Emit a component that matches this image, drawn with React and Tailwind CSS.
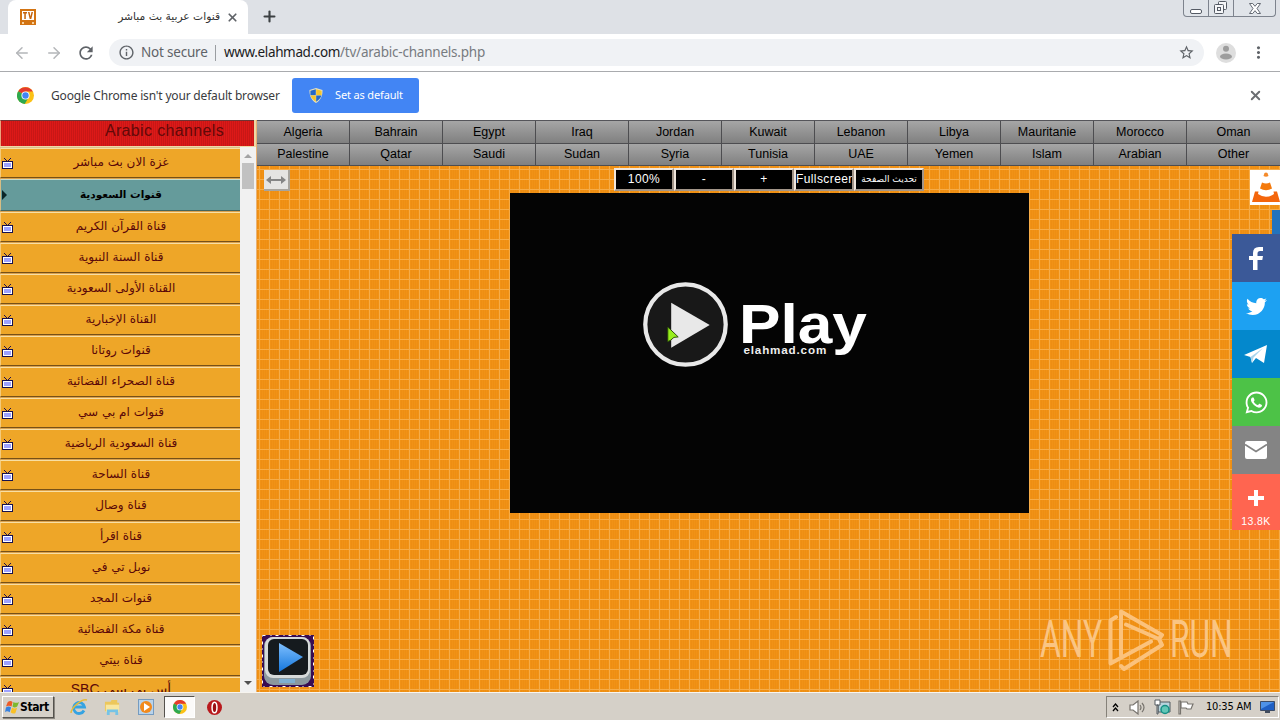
import React from 'react';
import { ArrowLeft, ArrowRight, X, Plus } from 'lucide-react';
import { FaFacebookF, FaTwitter, FaWhatsapp } from 'react-icons/fa';
import { MdRefresh, MdStarBorder, MdMoreVert, MdInfoOutline } from 'react-icons/md';

const channels = [
  'غزة الان بث مباشر',
  'قنوات السعودية',
  'قناة القرآن الكريم',
  'قناة السنة النبوية',
  'القناة الأولى السعودية',
  'القناة الإخبارية',
  'قنوات روتانا',
  'قناة الصحراء الفضائية',
  'قنوات ام بي سي',
  'قناة السعودية الرياضية',
  'قناة الساحة',
  'قناة وصال',
  'قناة اقرأ',
  'نوبل تي في',
  'قنوات المجد',
  'قناة مكة الفضائية',
  'قناة بيتي',
];

const countries = [
  ['Algeria', 'Bahrain', 'Egypt', 'Iraq', 'Jordan', 'Kuwait', 'Lebanon', 'Libya', 'Mauritanie', 'Morocco', 'Oman'],
  ['Palestine', 'Qatar', 'Saudi', 'Sudan', 'Syria', 'Tunisia', 'UAE', 'Yemen', 'Islam', 'Arabian', 'Other'],
];

const ChromeLogo = ({ className }) => (
  <svg viewBox="0 0 18 18" className={className}>
    <circle cx="9" cy="9" r="9" fill="#fbc116" />
    <path d="M9 9 1.2 4.5A9 9 0 0 1 16.8 4.8H9z" fill="#e33b2e" />
    <path d="M9 9 1.2 4.5A9 9 0 0 0 8.2 18l4-7z" fill="#2da94f" />
    <circle cx="9" cy="9" r="4.3" fill="#fff" />
    <circle cx="9" cy="9" r="3.4" fill="#4285f4" />
  </svg>
);

const Shield = () => (
  <svg viewBox="0 0 14 15" className="h-[15px] w-[14px]">
    <path d="M7 0 13.500 2C13.700 8 11.500 12.500 7 15 2.500 12.500.3 8 .5 2z" fill="#e7e2c0" />
    <path d="M6.800 1.200V7.200H1.400V2.700z" fill="#2468c8" />
    <path d="M7.200 1.200V7.200H12.600V2.700z" fill="#f5c52b" />
    <path d="M1.600 7.600H6.800V13.800C4 12 2.200 10 1.600 7.600z" fill="#f5c52b" />
    <path d="M12.400 7.600H7.200V13.800C10 12 11.800 10 12.400 7.600z" fill="#2468c8" />
  </svg>
);

const TvIcon = () => (
  <svg viewBox="0 0 11 11" className="h-[11px] w-[11px]" shapeRendering="crispEdges">
    <path d="M2 0h1v1H2zM3 1h1v1H3zM4 2h1v1H4zM5 3h1v1H5zM6 2h1v1H6zM7 1h1v1H7zM8 0h1v1H8z" fill="#20104a" />
    <rect x="0" y="3" width="11" height="8" fill="#15104f" />
    <rect x="1" y="4" width="9" height="6" fill="#fff" />
    <rect x="2" y="5" width="7" height="4" fill="#9da2ff" />
  </svg>
);

const Channel = ({ name, active }) => (
  <div className={`shrink-0 border-b border-[#d8a04d] ${active ? 'h-[33px]' : 'h-[31px]'}`}>
    <div
      className={`flex h-full items-center border-t border-b border-l pl-px ${
        active
          ? 'border-t-[#c9dccb] border-b-[#44645c] border-l-[#d7bd83] bg-[#659b9b]'
          : 'border-t-[#f8dfa4] border-b-[#765017] border-l-[#f4cb7c] bg-[#eea628]'
      }`}
    >
      <div className="w-[14px]">
        {active ? (
          <svg viewBox="0 0 5 10" className="h-[10px] w-[5px]"><path d="M0 0 5 5 0 10z" fill="#0a2627" /></svg>
        ) : (
          <TvIcon />
        )}
      </div>
      <span
        dir="rtl"
        className={`w-[210px] pb-[3px] text-center font-['DejaVu_Sans',sans-serif] leading-[18px] ${
          active ? 'text-[10.500px] font-bold text-black' : 'text-[12px] text-[#5a0808]'
        }`}
      >
        {name}
      </span>
    </div>
  </div>
);

const TitleBar = () => (
  <div className="flex h-[34px] bg-[#dee1e6]">
    <div className="ml-2 flex w-[240px] items-center rounded-t-lg bg-white pl-3">
      <svg viewBox="0 0 16 16" className="h-4 w-4">
        <rect width="16" height="16" fill="#d37413" />
        <path d="M2 2h12v9H2z" fill="#fff" />
        <path d="M3 3h4v1.500H5.800V10H4.300V4.500H3zM8 3h1.500l1 4.500 1-4.500H13l-1.700 7H9.700z" fill="#c4620b" />
        <path d="M2 13h2v2H2zM12 13h2v2h-2z" fill="#f7cf9a" />
      </svg>
      <span dir="rtl" className="ml-auto font-['DejaVu_Sans',sans-serif] text-[10.700px] text-[#333]">قنوات عربية بث مباشر</span>
      <X size={13} strokeWidth={3.2} className="mr-[9px] ml-[6px] text-[#5f6368]" />
    </div>
    <Plus size={17} strokeWidth={3} className="mt-2 ml-[13px] text-[#3c4043]" />
    <div className="mr-1 ml-auto flex h-[17px] w-[93px] rounded-b-[4px] border border-t-0 border-[#7d838d] bg-[#e0e4e9]">
      <div className="flex w-[25px] items-end justify-center border-r border-[#7d838d] pb-[2px]">
        <div className="h-[5px] w-3 rounded-[2px] border border-[#555b65] bg-white" />
      </div>
      <div className="flex w-[25px] items-center justify-center border-r border-[#7d838d]">
        <svg viewBox="0 0 14 14" className="h-[14px] w-[14px]" fill="#f6f7f9" stroke="#555b65">
          <rect x="4.500" y=".5" width="8" height="8" rx="1" />
          <rect x=".5" y="3.500" width="9" height="9" rx="1" />
          <rect x="3.500" y="6.500" width="3" height="3" />
        </svg>
      </div>
      <div className="flex flex-1 items-center justify-center">
        <svg viewBox="0 0 12 11" className="h-[11px] w-3" fill="#fff" stroke="#555b65" strokeWidth=".9">
          <path d="M.5.5h3.200L6 3.300 8.300.5h3.200L8 5.500l3.500 5H8.300L6 7.700l-2.300 2.800H.5l3.500-5z" />
        </svg>
      </div>
    </div>
  </div>
);

const Toolbar = () => (
  <div className="flex h-[38px] items-center border-b border-[#a9abae] bg-white text-[#5f6368]">
    <ArrowLeft size={18} className="ml-[13px] text-[#b4b6b9]" />
    <ArrowRight size={18} className="ml-[14px] text-[#b4b6b9]" />
    <MdRefresh size={20} className="ml-[13px]" />
    <div className="ml-[13px] flex h-[27px] w-[1095px] items-center rounded-full bg-[#f0f2f5] pl-[9px] font-['Noto_Sans',sans-serif] text-[13.500px]">
      <MdInfoOutline size={17} />
      <span className="ml-[6px] w-[67px] tracking-[-0.2px] whitespace-nowrap">Not secure</span>
      <span className="mr-[8px] ml-[7px] h-4 w-px bg-[#9a9da1]" />
      <span className="w-[116px] tracking-[-0.35px] text-[#1b1c1e]">www.elahmad.com</span>
      <span className="tracking-[-0.22px] text-[#777b80]">/tv/arabic-channels.php</span>
      <MdStarBorder size={17} className="mr-[9px] ml-auto" />
    </div>
    <svg viewBox="0 0 20 20" className="ml-3 h-5 w-5">
      <circle cx="10" cy="10" r="10" fill="#dedede" />
      <circle cx="10" cy="5.700" r="3" fill="#9d9d9d" />
      <ellipse cx="10" cy="13.500" rx="6" ry="3" fill="#9d9d9d" />
    </svg>
    <MdMoreVert size={19} className="ml-[13px]" />
  </div>
);

const DefaultBrowserBar = () => (
  <div className="flex h-12 items-center bg-white pb-px font-['Noto_Sans',sans-serif] text-[#3a3b3e]">
    <ChromeLogo className="ml-[17px] h-[17px] w-[17px]" />
    <span className="ml-[17px] w-[228px] text-[12px] tracking-[-0.18px] whitespace-nowrap">Google Chrome isn't your default browser</span>
    <button className="ml-[13px] flex h-[35px] w-[127px] items-center rounded-[3px] bg-[#4285f4] pl-[17px] text-white">
      <Shield />
      <span className="ml-[12px] text-[11px] tracking-[-0.15px] whitespace-nowrap">Set as default</span>
    </button>
    <X size={15} strokeWidth={3} className="mr-[17px] ml-auto text-[#6b6e72]" />
  </div>
);

const Sidebar = () => (
  <aside className="flex w-[257px] shrink-0 flex-col overflow-hidden border-r border-[#e9b274] bg-[#efd9a6]">
    <div className="mr-[2px] h-[26px] shrink-0 overflow-hidden border-t border-l border-t-[#6f3434] border-l-[#eba47d] bg-[#dd1918] bg-[repeating-linear-gradient(90deg,#00000018_0_1px,transparent_1px_2px)] pr-[30px] text-right font-['Liberation_Sans',sans-serif] text-[16px] leading-[19px] tracking-[0.35px] text-[#620909]">
      Arabic channels
    </div>
    <div className="mt-px flex min-h-0 flex-1">
      <div className="flex w-[240px] flex-col overflow-hidden border-t border-[#d8c18a]">
        {channels.map((name, i) => (
          <Channel key={name} name={name} active={i === 1} />
        ))}
        <div className="flex h-[31px] shrink-0 border-t border-l border-[#f8dfa4] bg-[#eea628] pl-px">
          <div className="w-[14px] pt-[7px]"><TvIcon /></div>
          <span dir="rtl" className="w-[210px] pt-px text-center font-['Liberation_Sans','DejaVu_Sans',sans-serif] text-[14px] text-[#5a0808]">أس بي سي SBC</span>
        </div>
      </div>
      <div className="flex w-4 flex-col items-center justify-between bg-[#f1f1f1] pt-[7px] pb-[7px]">
        <div className="flex flex-col items-center gap-[5px]">
          <svg viewBox="0 0 8 4" className="h-1 w-2"><path d="M0 4 4 0l4 4z" fill="#a3a3a3" /></svg>
          <div className="h-[26px] w-3 bg-[#c1c1c1]" />
        </div>
        <svg viewBox="0 0 8 4" className="h-1 w-2"><path d="M0 0 4 4l4-4z" fill="#505050" /></svg>
      </div>
    </div>
  </aside>
);

const CountryNav = () => (
  <nav className="h-[46px] border-t border-[#55555a] font-['Liberation_Sans',sans-serif] text-[12.500px] text-black">
    {countries.map((row, i) => (
      <div key={i} className="grid grid-cols-11">
        {row.map((c) => (
          <a key={c} className="flex h-[22.500px] items-center justify-center border-r border-b border-[#4d4d50] bg-gradient-to-b from-[#a6a6a6] to-[#808080] pt-px last:border-r-0">
            {c}
          </a>
        ))}
      </div>
    ))}
  </nav>
);

const ToolButton = ({ children, className }) => (
  <button className={`h-[23px] overflow-hidden border-2 border-t-[#f0e6dc] border-r-[#a29588] border-b-[#a29588] border-l-[#f0e6dc] bg-black text-white ${className}`}>
    {children}
  </button>
);

const Player = () => (
  <div className="relative h-[320px] w-[519px] bg-[#040404]">
    <div className="flex items-start pt-[89px] pl-[133px]">
      <svg viewBox="0 0 86 86" className="h-[85px] w-[85px]">
        <circle cx="43" cy="43" r="40.700" fill="#181818" stroke="#e8e8e8" strokeWidth="4.300" />
        <path d="M28.500 21v45.500L67.500 43.500z" fill="#e8e8e8" />
      </svg>
      <div className="mt-[11px] ml-[11px] origin-left scale-x-[1.11] font-['Liberation_Sans',sans-serif] text-white">
        <div className="text-[56px] leading-[62px] font-bold">Play</div>
        <div className="mt-[-11px] ml-[4px] text-[10.500px] leading-[12px] font-bold tracking-[0.75px] text-[#eee]">elahmad.com</div>
      </div>
    </div>
    <svg viewBox="0 0 12 18" className="absolute top-[134px] left-[157px] h-[17px] w-3">
      <path d="M.5 0 11.500 10.500 7 11 3.500 14 .5 15.500z" fill="#98ee1d" stroke="#274806" />
    </svg>
  </div>
);

const VlcIcon = () => (
  <svg viewBox="0 0 30 35" className="absolute top-[50px] right-0 h-[35px] w-[30px]">
    <rect width="30" height="35" fill="#fff" />
    <path d="M14.500 3q1.500-1 3 0l1 3q-2.500 1.500-5 0z" fill="#f58a2a" />
    <path d="M12 12.500q4 2 8 0l2 6q-6 3.500-12 0z" fill="#f47a0c" />
    <path d="M5 21.500h3.500L8 24q8 5.500 16 0l-.5-2.500H27l3 10.500H2z" fill="#f4660c" />
  </svg>
);

const ShareBar = () => (
  <div className="absolute top-[114px] right-0 flex w-12 flex-col text-white">
    <div className="flex h-12 items-center justify-center bg-[#3b5998]">
      <svg viewBox="0 0 14 23" className="h-[23px] w-[14px]">
        <path d="M4 23V13H0V9h4V6q0-6 6-6h4v4h-3q-2.500 0-2.500 2.500V9H14l-.7 4H8.500v10z" fill="#fff" />
      </svg>
    </div>
    <div className="flex h-12 items-center justify-center bg-[#1da1f2]">
      <FaTwitter size={21} />
    </div>
    <div className="flex h-12 items-center justify-center bg-[#0488cc]">
      <svg viewBox="0 0 24 20" className="h-5 w-6">
        <path d="M0 11 23 1l-3 18-8-5-4 5-1.500-6z" fill="#fff" />
        <path d="M6.500 13 19 4l-9.500 9.500L8 19z" fill="#a8d5ed" />
      </svg>
    </div>
    <div className="flex h-12 items-center justify-center bg-[#4dc247]">
      <FaWhatsapp size={25} />
    </div>
    <div className="flex h-12 items-center justify-center bg-[#848484]">
      <svg viewBox="0 0 22 18" className="h-[18px] w-[22px]">
        <rect width="22" height="18" rx="2" fill="#fff" />
        <path d="M0 3.500 11 10.500 22 3.500" fill="none" stroke="#848484" strokeWidth="1.800" />
      </svg>
    </div>
    <div className="flex h-14 flex-col items-center bg-[#ff6550] pt-[16px]">
      <svg viewBox="0 0 16 16" className="h-4 w-4"><path d="M6 0h4v6h6v4h-6v6H6v-6H0V6h6z" fill="#fff" /></svg>
      <span className="mt-[8px] font-['Liberation_Sans',sans-serif] text-[10.500px] leading-[14px] tracking-[0.4px]">13.8K</span>
    </div>
  </div>
);

const AppBadge = () => (
  <svg viewBox="0 0 52 52" className="absolute bottom-[5px] left-[5px] h-[52px] w-[52px]">
    <defs>
      <linearGradient id="badgePlay" x1="0" y1="0" x2="0" y2="1">
        <stop offset="0" stopColor="#7fc0ff" />
        <stop offset="1" stopColor="#1476dc" />
      </linearGradient>
    </defs>
    <rect width="52" height="52" fill="#380c52" />
    <rect x=".5" y=".5" width="51" height="51" fill="none" stroke="#fff" strokeDasharray="3 5 1 4" />
    <rect x="2" y="2" width="47" height="48" rx="9" fill="#8b989e" />
    <rect x="3" y="2" width="45" height="41" rx="8" fill="#d6dada" />
    <rect x="6" y="4" width="40" height="36" rx="6" fill="#151a1e" />
    <path d="M17 8v29l24-15z" fill="url(#badgePlay)" />
    <rect x="17" y="44" width="16" height="4" fill="#7eafd1" />
  </svg>
);

const Watermark = () => (
  <div className="absolute top-[490px] left-[783px] flex h-[60px] w-[192px] items-center font-['Roboto',sans-serif] text-[52px] leading-[60px] font-normal text-[#fac583]">
    <div className="w-[62px]"><span className="inline-block origin-left scale-x-[0.61]">ANY</span></div>
    <svg viewBox="0 0 56 62" className="ml-[6px] h-[62px] w-[56px] shrink-0" fill="none" stroke="#fbc27c" strokeWidth="4" strokeLinejoin="round" strokeLinecap="round">
      <path d="M8 8 2.500 11.500v43L43 32.500M13 46V2.500L54 26 51 30 18 15.500M13 57l3 3L54 36l-3-6" />
    </svg>
    <div className="ml-[6px] w-[62px]"><span className="inline-block origin-left scale-x-[0.61]">RUN</span></div>
  </div>
);

const MainPane = () => (
  <main className="relative flex-1 overflow-hidden bg-[#f09014]">
    <CountryNav />
    <div className="h-[526px] bg-[linear-gradient(90deg,transparent_9px,#f6ac48_9px),linear-gradient(transparent_9px,#f6ac48_9px),repeating-linear-gradient(90deg,#ee8e13_0_1px,#f19215_1px_2px)] bg-[length:10px_10px,10px_10px,2px_2px] bg-[position:3px_4px,3px_4px,0_0]">
      <div className="grid h-[27px] grid-cols-[357px_310px_1fr] items-start pt-[2px]">
        <div className="pt-[2px] pl-[7px]">
          <button className="flex h-[21px] w-[26px] items-center justify-center border-r-2 border-b-2 border-[#a7a49e] bg-[#e5e4e2]">
            <svg viewBox="0 0 20 8" className="h-2 w-5" fill="#858585"><path d="M0 4 5 0v3h10V0l5 4-5 4V5H5v3z" /></svg>
          </button>
        </div>
        <div className="flex font-['Liberation_Sans',sans-serif] text-[12px] leading-[19px] tracking-[0.4px]">
          <ToolButton className="w-[60px]">100%</ToolButton>
          <ToolButton className="w-[60px]">-</ToolButton>
          <ToolButton className="w-[60px]">+</ToolButton>
          <ToolButton className="w-[60px] text-left">Fullscreen</ToolButton>
          <ToolButton className="w-[70px] font-['DejaVu_Sans',sans-serif] text-[9px] tracking-normal whitespace-nowrap">تحديث الصفحة</ToolButton>
        </div>
      </div>
      <div className="pl-[253px]"><Player /></div>
    </div>
    <VlcIcon />
    <div className="absolute top-[90px] right-0 h-6 w-2 bg-[#2373bd]" />
    <ShareBar />
    <AppBadge />
    <Watermark />
  </main>
);

const Taskbar = () => (
  <footer className="flex h-7 items-center border-t border-[#f7f4ef] bg-[#d5d0c8] pt-[1px] text-black">
    <button className="ml-[2px] flex h-[22px] w-[52px] items-center border border-t-white border-r-[#55524d] border-b-[#55524d] border-l-white pl-[2px] shadow-[1px_1px_0_#8b8780]">
      <svg viewBox="0 0 16 16" className="h-[15px] w-[15px] shrink-0">
        <path d="M3 2q3-2 5 0L7 7Q4 5 1 7z" fill="#ed5b27" />
        <path d="M9 2q3 2 6 0l-2 5q-3 2-5 0z" fill="#7eb82d" />
        <path d="M1 8q3-2 5.500 0L5 13q-3-2-5 0z" fill="#3681df" />
        <path d="M7.500 8q3 2 5.500 0l-2 6q-3 1-5-1z" fill="#fac025" />
      </svg>
      <span className="font-['DejaVu_Sans_Condensed','DejaVu_Sans',sans-serif] text-[12px] font-bold tracking-[-0.4px]">Start</span>
    </button>
    <svg viewBox="0 0 18 18" className="ml-[16px] h-[18px] w-[18px]" fill="none">
      <path d="M14 12.500a5.500 5.500 0 1 1 .5-3.500H5" stroke="#35a3e2" strokeWidth="2.800" />
      <path d="M1 15C1 10 12 0 17 2" stroke="#e6bb3b" strokeWidth="1.400" />
    </svg>
    <svg viewBox="0 0 18 18" className="ml-[16px] h-[17px] w-[17px]">
      <path d="M1 3h6l1-2h6v3h2v9H1z" fill="#ecc75b" />
      <path d="M2 6h14v8H2z" fill="#f8e69f" />
      <path d="M3 11h12v6h-3v-3H6v3H3z" fill="#76c3e6" />
    </svg>
    <svg viewBox="0 0 16 16" className="ml-[17px] h-[16px] w-[16px]">
      <rect x=".5" y=".5" width="15" height="15" fill="#b9d3ea" stroke="#759bc0" />
      <circle cx="8" cy="8" r="6" fill="#f28a1c" />
      <path d="M6 4v8l6-4z" fill="#fff" />
    </svg>
    <div className="ml-[10px] flex h-[22px] w-[31px] items-center justify-center border border-t-[#55524d] border-r-white border-b-white border-l-[#55524d] bg-[#fbfaf9]">
      <ChromeLogo className="h-[14px] w-[14px]" />
    </div>
    <svg viewBox="0 0 16 16" className="ml-[12px] h-[15px] w-[15px]">
      <circle cx="8" cy="8" r="8" fill="#b9191d" />
      <ellipse cx="8" cy="8" rx="2.600" ry="5.600" fill="#9b1014" stroke="#fff" strokeWidth="1.600" />
    </svg>
    <div className="mr-[1px] ml-auto flex h-[22px] w-[173px] items-center border border-t-[#858179] border-r-white border-b-white border-l-[#858179] pl-[5px]">
      <svg viewBox="0 0 7 9" className="h-[9px] w-[7px]" fill="none" stroke="#000" strokeWidth="1.300"><path d="M1 4l2.500-3L6 4M1 8l2.500-3L6 8" /></svg>
      <svg viewBox="0 0 17 15" className="ml-[10px] h-[15px] w-[17px]" fill="none" stroke="#77736d" strokeWidth="1.200">
        <path d="M1 5h3l5-4v13l-5-4H1z" fill="#fff" />
        <path d="M11 5q2 2.500 0 5M13 3q4 4.500 0 9" />
      </svg>
      <svg viewBox="0 0 17 16" className="ml-[8px] h-[16px] w-[17px]">
        <path d="M4 3h12v10H4z" fill="#b7d4dd" stroke="#535a60" />
        <path d="M1 1h5v5H1zM3 6h1v9H3z" fill="#fff" stroke="#535a60" />
        <circle cx="11" cy="10.500" r="4" fill="#63c7b7" stroke="#148f85" strokeWidth="1.500" />
      </svg>
      <svg viewBox="0 0 16 15" className="ml-[7px] h-[15px] w-[16px]" fill="#fff" stroke="#77736d" strokeWidth="1.200">
        <path d="M1 1v13h1.500V1zM3 2h6l1 2h5l-2 5H9L8 8H3z" />
      </svg>
      <span className="ml-[12px] w-[46px] font-['DejaVu_Sans_Condensed','DejaVu_Sans',sans-serif] text-[11px] tracking-[-0.2px] whitespace-nowrap">10:35 AM</span>
      <svg viewBox="0 0 15 13" className="ml-[8px] h-[13px] w-[15px]">
        <path d="M.5.5h14v9H.5z" fill="#1f5fc4" stroke="#3d4c66" />
        <path d="M1 1h13L1 8z" fill="#4e92e8" />
        <path d="M5 10h5v2H5z" fill="#414c5d" />
      </svg>
    </div>
  </footer>
);

export default function App() {
  return (
    <div className="flex h-[720px] w-[1280px] flex-col overflow-hidden">
      <TitleBar />
      <Toolbar />
      <DefaultBrowserBar />
      <div className="flex h-[572px]">
        <Sidebar />
        <MainPane />
      </div>
      <Taskbar />
    </div>
  );
}
